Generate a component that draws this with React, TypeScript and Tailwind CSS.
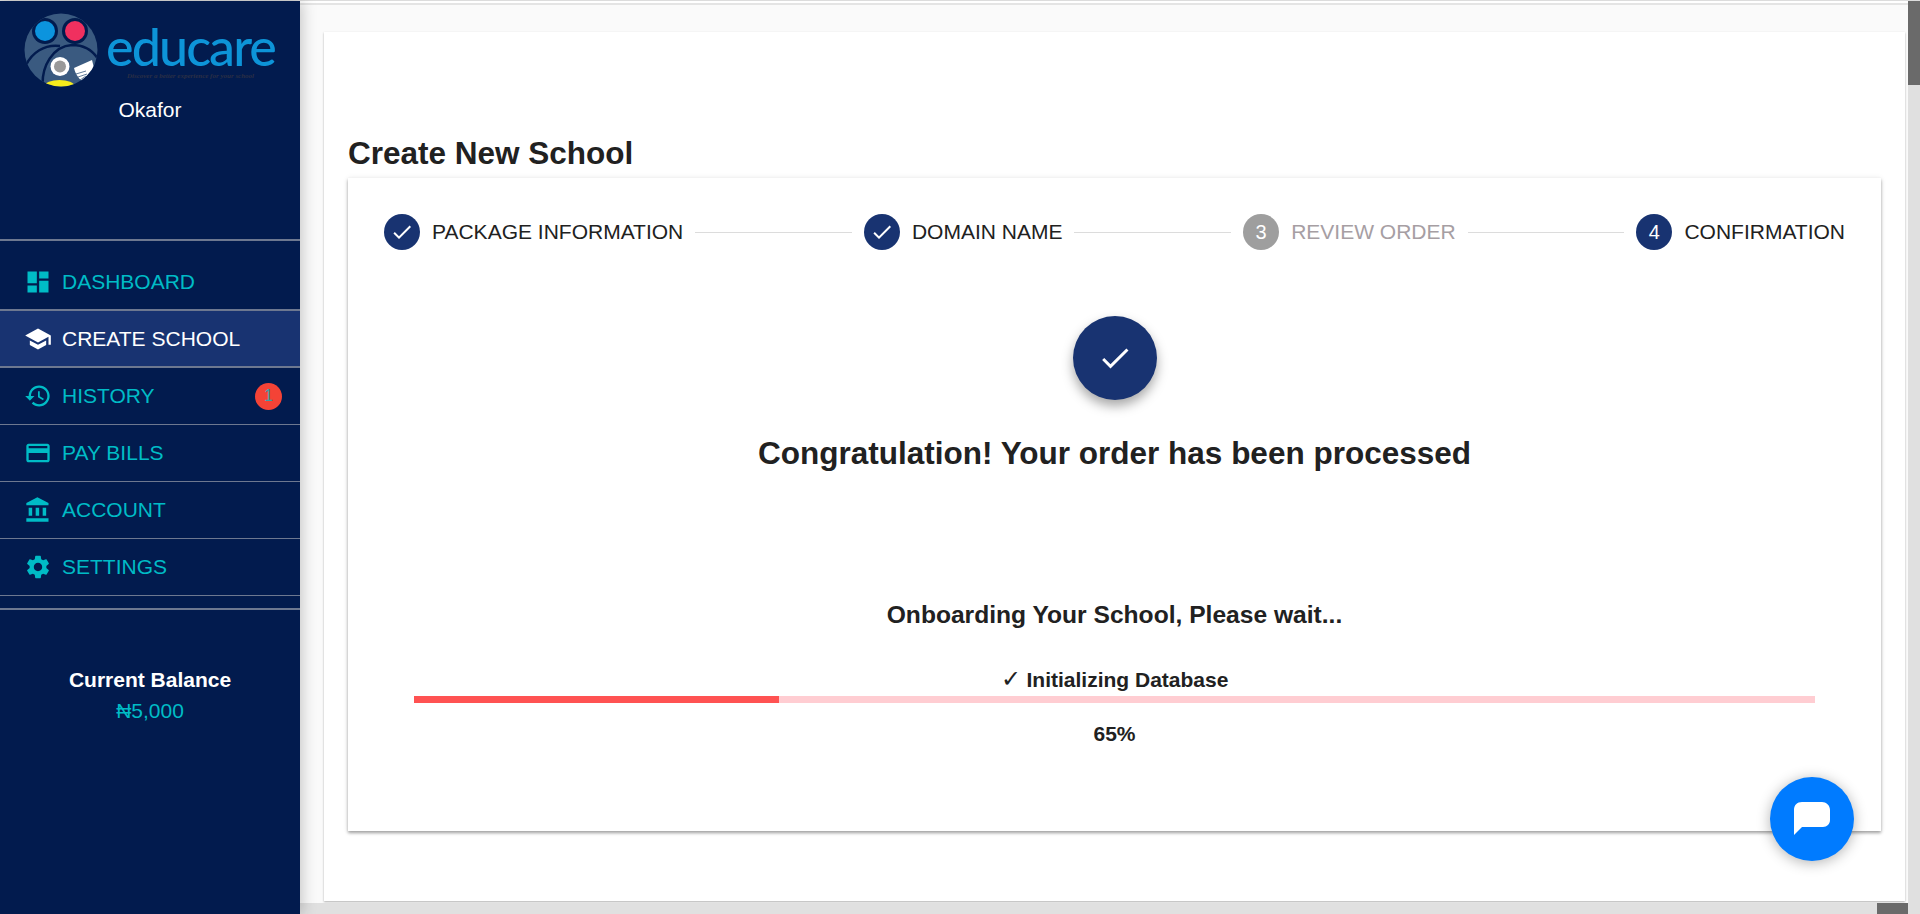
import { Fragment } from "react";

const icons = {
  dashboard: "M3 13h8V3H3v10zm0 8h8v-6H3v6zm10 0h8V11h-8v10zm0-18v6h8V3h-8z",
  school: "M5 13.18v4L12 21l7-3.82v-4L12 17l-7-3.82zM12 3L1 9l11 6 9-4.91V17h2V9L12 3z",
  history:
    "M13 3c-4.97 0-9 4.03-9 9H1l3.89 3.89.07.14L9 12H6c0-3.87 3.13-7 7-7s7 3.13 7 7-3.13 7-7 7c-1.93 0-3.68-.79-4.94-2.06l-1.42 1.42C8.27 19.99 10.51 21 13 21c4.97 0 9-4.03 9-9s-4.03-9-9-9zm-1 5v5l4.28 2.54.72-1.21-3.5-2.08V8H12z",
  card: "M20 4H4c-1.11 0-1.99.89-1.99 2L2 18c0 1.11.89 2 2 2h16c1.11 0 2-.89 2-2V6c0-1.11-.89-2-2-2zm0 14H4v-6h16v6zm0-10H4V6h16v2z",
  bank: "M4 10v7h3v-7H4zm6 0v7h3v-7h-3zM2 22h19v-3H2v3zm14-12v7h3v-7h-3zm-4.5-9L2 6v2h19V6l-9.5-5z",
  settings:
    "M19.14 12.94c.04-.3.06-.61.06-.94 0-.32-.02-.64-.07-.94l2.03-1.58c.18-.14.23-.41.12-.61l-1.92-3.32c-.12-.22-.37-.29-.59-.22l-2.39.96c-.5-.38-1.03-.7-1.62-.94l-.36-2.54c-.04-.24-.24-.41-.48-.41h-3.84c-.24 0-.43.17-.47.41l-.36 2.54c-.59.24-1.13.57-1.62.94l-2.39-.96c-.22-.08-.47 0-.59.22L2.74 8.87c-.12.21-.08.47.12.61l2.03 1.58c-.05.3-.09.63-.09.94s.02.64.07.94l-2.03 1.58c-.18.14-.23.41-.12.61l1.92 3.32c.12.22.37.29.59.22l2.39-.96c.5.38 1.03.7 1.62.94l.36 2.54c.05.24.24.41.48.41h3.84c.24 0 .44-.17.47-.41l.36-2.54c.59-.24 1.13-.56 1.62-.94l2.39.96c.22.08.47 0 .59-.22l1.92-3.32c.12-.22.07-.47-.12-.61l-2.01-1.58zM12 15.6c-1.98 0-3.6-1.62-3.6-3.6s1.62-3.6 3.6-3.6 3.6 1.62 3.6 3.6-1.62 3.6-3.6 3.6z",
  check: "M9 16.17L4.83 12l-1.41 1.41L9 19 21 7l-1.41-1.41z",
};

const nav = [
  { label: "DASHBOARD", icon: icons.dashboard, thick: true },
  { label: "CREATE SCHOOL", icon: icons.school, active: true, thick: true },
  { label: "HISTORY", icon: icons.history, badge: "1" },
  { label: "PAY BILLS", icon: icons.card },
  { label: "ACCOUNT", icon: icons.bank },
  { label: "SETTINGS", icon: icons.settings },
];

const Icon = ({ d, className }: { d: string; className: string }) => (
  <svg viewBox="0 0 24 24" fill="currentColor" className={className}>
    <path d={d} />
  </svg>
);

const Logo = () => (
  <div className="flex items-start pl-6 pt-3">
    <svg viewBox="0 0 74 74" className="w-[74px] h-[74px] shrink-0">
      <defs>
        <clipPath id="logoClip">
          <circle cx="37" cy="37" r="36.5" />
        </clipPath>
      </defs>
      <circle cx="37" cy="37" r="36.5" fill="#3a5a80" />
      <g clipPath="url(#logoClip)">
        <circle cx="21" cy="18" r="13" fill="#021b4e" />
        <circle cx="51" cy="18" r="13" fill="#021b4e" />
        <circle cx="21" cy="18" r="10" fill="#0c94de" />
        <circle cx="51" cy="18" r="10" fill="#f0305f" />
        <path d="M2 52C8 40 20 31 36 33" fill="none" stroke="#021b4e" strokeWidth="2.5" />
        <path d="M19 78C16 52 30 33 48 32C60 32 69 38 74 46" fill="none" stroke="#021b4e" strokeWidth="2.5" />
        <circle cx="36" cy="53.5" r="9.5" fill="#fff" />
        <circle cx="36" cy="53.5" r="6" fill="#999" />
        <path d="M50 55L68 47L70 55L58 68C54 65 51 60 50 55Z" fill="#fff" />
        <path d="M52 61L62 58M54 64L63 61M56 67L62 63" stroke="#3a5a80" strokeWidth="0.8" />
        <ellipse cx="35.5" cy="73" rx="15" ry="6" fill="#f7ec1c" />
      </g>
    </svg>
    <div className="flex flex-col items-center ml-2">
      <span className="font-['Lato',sans-serif] font-medium text-[52px] leading-[48px] mt-[9px] tracking-[-1.9px] text-[#0d94d8]">
        educare
      </span>
      <span className="font-['Liberation_Serif',serif] italic font-bold text-[7px] leading-[8px] text-[#2b2f45] mt-[2px]">
        Discover a better experience for your school
      </span>
    </div>
  </div>
);

const Sidebar = () => (
  <aside className="relative z-10 w-[300px] shrink-0 bg-[#021b4e] shadow-[2px_0_14px_rgba(0,0,0,0.22)] flex flex-col">
    <div className="h-[240px] border-b-2 border-[#6d7890]">
      <Logo />
      <p className="text-center text-white text-[21px] leading-6 mt-[11px]">Okafor</p>
    </div>
    <nav className="flex flex-col pt-[13px]">
      {nav.map((item) => (
        <div
          key={item.label}
          className={`h-[57px] flex items-center pl-6 pr-[18px] border-[#6d7890] ${item.thick ? "border-b-2" : "border-b"} ${
            item.active ? "bg-[#183371] text-white" : "text-[#00bcc6]"
          }`}
        >
          <Icon d={item.icon} className="w-7 h-7 shrink-0" />
          <span className="ml-[10px] text-[21px] flex-1">{item.label}</span>
          {item.badge && (
            <span className="w-[27px] h-[27px] rounded-full bg-[#f44336] flex items-center justify-center text-[16px] text-[#3aa0a8]">
              {item.badge}
            </span>
          )}
        </div>
      ))}
    </nav>
    <div className="h-[2px] mt-[12px] bg-[#6d7890]" />
    <div className="mt-[54px] text-center text-[21px] leading-[31px]">
      <p className="font-bold text-white">Current Balance</p>
      <p className="text-[#00bcc6]">₦5,000</p>
    </div>
  </aside>
);

const steps = [
  { label: "PACKAGE INFORMATION", done: true },
  { label: "DOMAIN NAME", done: true },
  { label: "REVIEW ORDER", num: "3", muted: true },
  { label: "CONFIRMATION", num: "4" },
];

const Stepper = () => (
  <div className="flex items-center">
    {steps.map((s, i) => (
      <Fragment key={s.label}>
        {i > 0 && <div className="flex-1 h-px bg-[#dcdcdc] mx-3" />}
        <div
          className={`w-9 h-9 rounded-full flex items-center justify-center text-white text-[20px] shrink-0 ${
            s.muted ? "bg-[#9e9e9e]" : "bg-[#183371]"
          }`}
        >
          {s.done ? <Icon d={icons.check} className="w-6 h-6" /> : s.num}
        </div>
        <span className={`ml-3 text-[21px] whitespace-nowrap ${s.muted ? "text-[#a69ea3]" : "text-[#212121]"}`}>
          {s.label}
        </span>
      </Fragment>
    ))}
  </div>
);

const Card = () => (
  <div className="mx-6 h-[653px] bg-white shadow-[0_2px_3px_rgba(0,0,0,0.35),0_0_6px_rgba(0,0,0,0.08)] px-9 pt-9 flex flex-col text-[#212121]">
    <Stepper />
    <div className="mt-[66px] w-[84px] h-[84px] rounded-full bg-[#183371] self-center flex items-center justify-center text-white shadow-[0_6px_12px_rgba(0,0,0,0.35)]">
      <Icon d={icons.check} className="w-9 h-9" />
    </div>
    <h2 className="mt-[35px] text-center font-bold text-[31.5px] leading-9">Congratulation! Your order has been processed</h2>
    <h3 className="mt-[130px] text-center font-bold text-[24.6px] leading-7">Onboarding Your School, Please wait...</h3>
    <p className="mt-[38px] h-[22px] text-center font-bold text-[21px] leading-[22px]">
      <span className="text-[24px] leading-none font-normal">✓</span> Initializing Database
    </p>
    <div className="mt-[7px] mx-[30px] h-[7px] bg-[#ffcdd2]">
      <div className="h-full w-[365px] bg-[#ff5252]" />
    </div>
    <p className="mt-5 text-center font-bold text-[21px] leading-[22px]">65%</p>
  </div>
);

export default function App() {
  return (
    <div className="relative h-[914px] overflow-hidden flex flex-col bg-white font-['Liberation_Sans',Arial,sans-serif]">
      <div className="h-px bg-[#dcdcdc] shrink-0" />
      <div className="flex flex-1 min-h-0">
        <Sidebar />
        <div className="flex-1 min-w-0 flex flex-col">
          <div className="flex flex-1 min-h-0">
            <main className="flex-1 min-w-0 bg-[#fafafa] border-t-2 border-[#e4e4e4] mt-[2px] pt-[27px] pl-6 pr-[3px] pb-[2px]">
              <div className="h-full bg-white shadow-[0_1px_2px_rgba(0,0,0,0.3)] pt-[103px]">
                <h1 className="ml-6 text-[31.5px] leading-9 font-bold text-[#212121] mb-[7px]">Create New School</h1>
                <Card />
              </div>
            </main>
            <div className="w-3 shrink-0 bg-[#e0e0e0]">
              <div className="h-[84px] bg-[#6a6a6a]" />
            </div>
          </div>
          <div className="h-[11px] shrink-0 bg-[#e0e0e0] flex justify-end pr-3">
            <div className="w-[31px] bg-[#6a6a6a]" />
          </div>
        </div>
      </div>
      {/* chat bubble */}
      <button className="absolute left-[1770px] top-[777px] w-[84px] h-[84px] rounded-full bg-[#007bff] flex items-center justify-center shadow-[0_2px_14px_rgba(0,0,0,0.3)]">
        <svg viewBox="0 0 36 34" className="w-9 h-[34px]" fill="#fff">
          <path d="M8 0H28C32 0 36 3 36 8V18C36 22 33 25 29 25H8L0 33V8C0 3 3 0 8 0Z" />
        </svg>
      </button>
    </div>
  );
}
